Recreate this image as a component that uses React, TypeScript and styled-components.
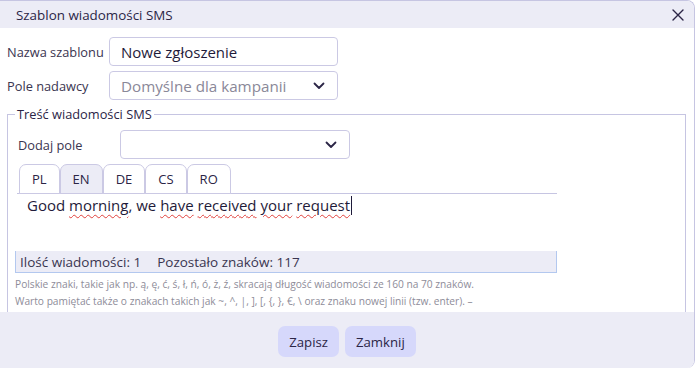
import React from 'react';
import styled, { createGlobalStyle } from 'styled-components';

const GlobalStyle = createGlobalStyle`
  html, body {
    margin: 0;
    padding: 0;
    background: #ffffff;
  }
  body {
    font-family: "Open Sans", "Liberation Sans", sans-serif;
    color: #2b2546;
  }
  * {
    box-sizing: border-box;
  }
`;

const Dialog = styled.div`
  height: 368px;
  display: flex;
  flex-direction: column;
  background: #fff;
  border-top: 1px solid #c6c5e2;
  border-right: 1px solid #c6c5e2;
  border-radius: 0 8px 8px 0;
  overflow: hidden;
`;

const Header = styled.div`
  height: 27px;
  flex: none;
  display: flex;
  align-items: center;
  justify-content: space-between;
  padding: 0 8px 0 16px;
  background: #ececf6;
`;

const Title = styled.span`
  font-size: 13.4px;
  color: #2b2546;
`;

const CloseButton = styled.button`
  width: 16px;
  height: 16px;
  padding: 0;
  border: 0;
  background: none;
  display: flex;
  align-items: center;
  justify-content: center;
  cursor: pointer;
`;

const Body = styled.div`
  flex: 1;
  overflow-y: auto;
  padding: 9px 8px 0 7px;

  &::-webkit-scrollbar {
    width: 8px;
  }
  &::-webkit-scrollbar-track {
    background: #fff;
  }
  &::-webkit-scrollbar-thumb {
    background: #cbcbd6;
    border-radius: 4px;
  }
`;

const FormRow = styled.div<{ $indent?: number }>`
  display: grid;
  grid-template-columns: 102px 230px;
  align-items: center;
  padding-left: ${(p) => p.$indent ?? 0}px;
  margin-bottom: 5px;
`;

const Label = styled.label`
  font-size: 12.8px;
  color: #3a3550;
`;

const TextInput = styled.input`
  height: 29px;
  width: 229px;
  border: 1px solid #cbc9e4;
  border-radius: 4px;
  padding: 0 11px;
  font-family: inherit;
  font-size: 15px;
  color: #1f1b3a;
  outline: none;
`;

const SelectBox = styled.div<{ $width: number }>`
  height: 29px;
  width: ${(p) => p.$width}px;
  border: 1px solid #cbc9e4;
  border-radius: 4px;
  padding: 0 12px 0 11px;
  display: flex;
  align-items: center;
  justify-content: space-between;
  font-size: 15.2px;
  color: #8a8898;
`;

const Fieldset = styled.fieldset`
  margin: 4px 0 0 0;
  padding: 7px 8px 20px 7px;
  border: 1px solid #c6c5e2;
  min-width: 0;
`;

const Legend = styled.legend`
  padding: 0 2px;
  font-size: 12.8px;
  color: #2b2546;
`;

const TabBar = styled.div`
  display: flex;
  margin: 1px 0 0 2px;
  padding-left: 2px;
  width: 540px;
  border-bottom: 1px solid #c6c5e2;
`;

const Tab = styled.button<{ $active?: boolean }>`
  height: 30px;
  padding: 0 12px;
  margin-bottom: -1px;
  border: 1px solid #cbc9e4;
  border-radius: 7px 7px 0 0;
  background: ${(p) => (p.$active ? '#ececf6' : '#fff')};
  font-family: inherit;
  font-size: 13px;
  color: #2b2546;
  cursor: pointer;
`;

const MessageArea = styled.div`
  margin-left: 2px;
  width: 540px;
  height: 57px;
  padding: 0 10px;
  font-size: 15px;
  line-height: 22px;
  color: #1f1b3a;
`;

const Misspelled = styled.span`
  text-decoration: underline wavy #e0413c;
  text-decoration-thickness: 1px;
  text-underline-offset: 3px;
`;

const Caret = styled.span`
  display: inline-block;
  width: 1px;
  height: 19px;
  margin-left: 1px;
  vertical-align: -4px;
  background: #1f1b3a;
`;

const Counter = styled.div`
  width: 542px;
  height: 22px;
  display: flex;
  align-items: center;
  gap: 16px;
  padding: 0 4px;
  background: #ececf6;
  border: 1px solid #b3c8ef;
  border-top: 0;
  font-size: 13.5px;
  color: #3a3550;
`;

const HelpText = styled.p`
  margin: 3px 0 0;
  font-size: 10.2px;
  line-height: 16.5px;
  color: #8e8c99;
`;

const Footer = styled.div`
  height: 56px;
  flex: none;
  display: flex;
  justify-content: center;
  align-items: flex-start;
  gap: 6px;
  padding-top: 14px;
  background: #ececf6;
`;

const FooterButton = styled.button`
  height: 31px;
  padding: 0 11px;
  border: 0;
  border-radius: 7px;
  background: #d6d8fb;
  font-family: inherit;
  font-size: 13.2px;
  color: #2b2546;
  cursor: pointer;
`;

const Chevron = () => (
  <svg width="12" height="8" viewBox="0 0 12 8" fill="none">
    <path d="M1.5 1.5L6 6L10.5 1.5" stroke="#2b2546" strokeWidth="1.8" strokeLinecap="round" strokeLinejoin="round" />
  </svg>
);

const CloseIcon = () => (
  <svg width="12" height="12" viewBox="0 0 12 12" fill="none">
    <path d="M1 1L11 11M11 1L1 11" stroke="#2b2546" strokeWidth="1.4" strokeLinecap="round" />
  </svg>
);

const languages = ['PL', 'EN', 'DE', 'CS', 'RO'];

export default function App() {
  return (
    <>
      <GlobalStyle />
      <Dialog>
        <Header>
          <Title>Szablon wiadomości SMS</Title>
          <CloseButton aria-label="Zamknij">
            <CloseIcon />
          </CloseButton>
        </Header>
        <Body>
          <FormRow>
            <Label>Nazwa szablonu</Label>
            <TextInput defaultValue="Nowe zgłoszenie" />
          </FormRow>
          <FormRow>
            <Label>Pole nadawcy</Label>
            <SelectBox $width={229}>
              <span>Domyślne dla kampanii</span>
              <Chevron />
            </SelectBox>
          </FormRow>
          <Fieldset>
            <Legend>Treść wiadomości SMS</Legend>
            <FormRow $indent={3}>
              <Label>Dodaj pole</Label>
              <SelectBox $width={230}>
                <span />
                <Chevron />
              </SelectBox>
            </FormRow>
            <TabBar>
              {languages.map((lang) => (
                <Tab key={lang} $active={lang === 'EN'}>
                  {lang}
                </Tab>
              ))}
            </TabBar>
            <MessageArea role="textbox">
              Good <Misspelled>morning</Misspelled>, we <Misspelled>have</Misspelled>{' '}
              <Misspelled>received</Misspelled> <Misspelled>your</Misspelled>{' '}
              <Misspelled>request</Misspelled>
              <Caret />
            </MessageArea>
            <Counter>
              <span>Ilość wiadomości: 1</span>
              <span>Pozostało znaków: 117</span>
            </Counter>
            <HelpText>
              Polskie znaki, takie jak np. ą, ę, ć, ś, ł, ń, ó, ż, ź, skracają długość wiadomości ze 160 na 70 znaków.
              <br />
              Warto pamiętać także o znakach takich jak ~, ^, |, ], [, {'{'}, {'}'}, €, \ oraz znaku nowej linii (tzw. enter). –
              <br />
              zajmuje one miejsce dwóch znaków w treści wiadomości.
            </HelpText>
          </Fieldset>
        </Body>
        <Footer>
          <FooterButton>Zapisz</FooterButton>
          <FooterButton>Zamknij</FooterButton>
        </Footer>
      </Dialog>
    </>
  );
}
